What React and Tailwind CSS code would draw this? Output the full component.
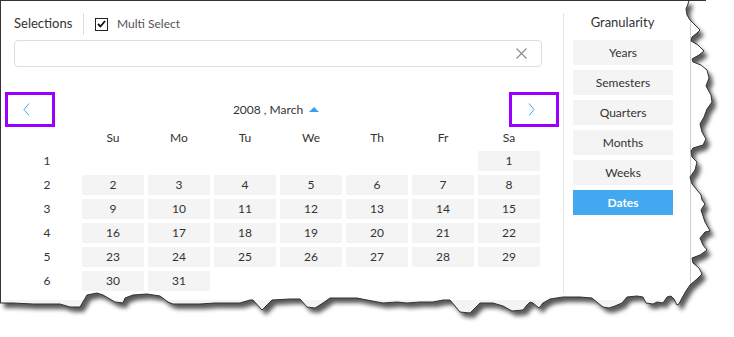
import React from 'react';

const edge = [
  [689, 0], [688, 4], [686, 9], [687, 15], [690, 20], [696, 26], [700, 30], [697, 33], [692, 37], [691, 41],
  [698, 45], [704, 51], [699, 55], [692, 59], [693, 62], [701, 65], [707, 70], [709, 78], [706, 86], [711, 95],
  [712, 102], [707, 109], [704, 117], [700, 124], [702, 132], [706, 139], [703, 145], [693, 148], [691, 151],
  [692, 157], [697, 162], [695, 170], [690, 177], [692, 184], [697, 190], [701, 195], [702, 200], [705, 204],
  [701, 210], [703, 216], [705, 222], [709, 229], [710, 231], [705, 232], [700, 238], [703, 245], [707, 250],
  [700, 255], [692, 258], [693, 263], [699, 268], [702, 274], [697, 279], [690, 285], [686, 291], [682, 298],
  [679, 304], [677, 305], [674, 299], [671, 296], [667, 297], [663, 303], [657, 302], [653, 304], [646, 303],
  [643, 297], [637, 296], [627, 297], [622, 303], [615, 306], [609, 308], [603, 307], [598, 303], [592, 298],
  [580, 297], [563, 297], [550, 299], [543, 303], [539, 308], [533, 303], [530, 302], [527, 305], [523, 310],
  [512, 311], [503, 306], [493, 303], [480, 303], [470, 313], [460, 312], [450, 300], [443, 300], [433, 302],
  [420, 302], [407, 303], [397, 302], [383, 303], [367, 300], [357, 298], [340, 298], [330, 298], [323, 303],
  [315, 308], [307, 307], [300, 299], [290, 299], [272, 300], [262, 310], [253, 300], [250, 300], [240, 303],
  [215, 303], [200, 304], [173, 304], [168, 302], [160, 296], [147, 294], [133, 295], [125, 298], [123, 303],
  [115, 302], [103, 295], [97, 293], [87, 295], [80, 307], [70, 307], [60, 304], [33, 304], [13, 303], [0, 303],
];

const edgeLine = edge.map(([x, y], i) => `${i === 0 ? 'M' : 'L'}${x} ${y}`).join(' ');
const panelShape = `M0 0 ${edgeLine.replace(/^M/, 'L')} Z`;

const weeks = [
  [null, null, null, null, null, null, 1],
  [2, 3, 4, 5, 6, 7, 8],
  [9, 10, 11, 12, 13, 14, 15],
  [16, 17, 18, 19, 20, 21, 22],
  [23, 24, 25, 26, 27, 28, 29],
  [30, 31, null, null, null, null, null],
];

const dayNames = ['Su', 'Mo', 'Tu', 'We', 'Th', 'Fr', 'Sa'];
const granularity = ['Years', 'Semesters', 'Quarters', 'Months', 'Weeks', 'Dates'];

const TornEdge = () => (
  <svg className="absolute left-0 top-0 pointer-events-none" width="734" height="337" viewBox="0 0 734 337">
    <defs>
      <filter id="blur" x="-10%" y="-10%" width="120%" height="120%">
        <feGaussianBlur stdDeviation="2.2" />
      </filter>
      <clipPath id="outside">
        <path d={`M0 0H734V337H0Z ${panelShape}`} clipRule="evenodd" />
      </clipPath>
    </defs>
    <path d={`M0 0H734V337H0Z ${panelShape}`} fill="#ffffff" fillRule="evenodd" />
    <g clipPath="url(#outside)">
      <path d={panelShape} fill="#3a3a3a" opacity="0.85" transform="translate(4 5)" filter="url(#blur)" />
    </g>
    <path d={edgeLine} fill="none" stroke="#333333" strokeWidth="1" />
    <line x1="688" y1="0.5" x2="706" y2="0.5" stroke="#333333" strokeWidth="1" />
  </svg>
);

const Chevron = ({ dir }) => (
  <svg width="7" height="13" viewBox="0 0 7 13" fill="none" stroke="#42a5ee" strokeWidth="1">
    {dir === 'left' ? <path d="M6 0.5 L1 6.5 L6 12.5" /> : <path d="M1 0.5 L6 6.5 L1 12.5" />}
  </svg>
);

const App = () => {
  return (
    <div className="relative w-[734px] h-[337px] overflow-hidden bg-white font-['Lato',sans-serif] text-[#333]">
      <div className="flex flex-col w-[691px] h-[315px] border-t border-l border-t-[#333] border-l-[#333] border-r border-r-[#cccccc]">
        <div className="flex h-[299px] bg-white">
          {/* selections + calendar */}
          <div className="w-[562px] pt-[12px]">
            <div className="flex items-center h-[22px] ml-[13px]">
              <span className="w-[69px] text-[13px]">Selections</span>
              <div className="w-px h-[22px] bg-[#dddddd]" />
              <div className="ml-[11px] w-[13px] h-[13px] border border-[#222] flex items-center justify-center">
                <svg width="9" height="8" viewBox="0 0 9 8" fill="none" stroke="#111" strokeWidth="1.8">
                  <path d="M1 4 L3.5 6.5 L8 1" />
                </svg>
              </div>
              <span className="ml-[9px] text-[12px] text-[#555]">Multi Select</span>
            </div>

            <div className="mt-[5px] ml-[13px] w-[528px] h-[27px] border border-[#dedede] rounded-[4px] flex items-center justify-end pr-[14px]">
              <svg width="11" height="11" viewBox="0 0 11 11" stroke="#8a8a8a" strokeWidth="1.1">
                <path d="M0.5 0.5 L10.5 10.5 M10.5 0.5 L0.5 10.5" />
              </svg>
            </div>

            <div className="mt-[25px] ml-[4px] w-[554px] flex items-center">
              <button className="w-[50px] h-[35px] border-[3px] border-[#9b00ff] flex items-center justify-center pr-[8px]">
                <Chevron dir="left" />
              </button>
              <div className="flex-1 flex items-center justify-center pr-[12px] text-[12px]">
                <span>2008 , March</span>
                <svg className="ml-[6px]" width="10" height="5" viewBox="0 0 10 5">
                  <path d="M0 5 L5 0 L10 5 Z" fill="#3a9fe8" />
                </svg>
              </div>
              <button className="w-[50px] h-[35px] border-[3px] border-[#9b00ff] flex items-center justify-center pr-[6px]">
                <Chevron dir="right" />
              </button>
            </div>

            <div className="mt-[1px] ml-[15px] grid grid-cols-[repeat(8,62px)] grid-rows-[19px_repeat(6,20px)] gap-[4px] text-[12px]">
              <div />
              {dayNames.map((d) => (
                <div key={d} className="flex items-center justify-center">{d}</div>
              ))}
              {weeks.map((week, wi) => (
                <React.Fragment key={wi}>
                  <div className="flex items-center justify-center">{wi + 1}</div>
                  {week.map((day, di) =>
                    day ? (
                      <div key={di} className="flex items-center justify-center bg-[#f4f4f4]">{day}</div>
                    ) : (
                      <div key={di} />
                    )
                  )}
                </React.Fragment>
              ))}
            </div>
          </div>

          {/* granularity */}
          <div className="mt-[12px] h-[280px] w-[127px] border-l border-[#e3e3e3]">
            <div className="h-[20px] flex items-center justify-center pr-[9px] text-[13px]">Granularity</div>
            <div className="mt-[7px] ml-[9px] flex flex-col gap-[5px]">
              {granularity.map((g) => (
                <div
                  key={g}
                  className={
                    g === 'Dates'
                      ? 'w-[100px] h-[25px] flex items-center justify-center text-[12px] font-bold bg-[#42a9f0] text-white'
                      : 'w-[100px] h-[25px] flex items-center justify-center text-[12px] bg-[#f4f4f4] text-[#333]'
                  }
                >
                  {g}
                </div>
              ))}
            </div>
          </div>
        </div>
        <div className="flex-1 bg-[#f4f4f4]" />
      </div>
      <TornEdge />
    </div>
  );
};

export default App;
